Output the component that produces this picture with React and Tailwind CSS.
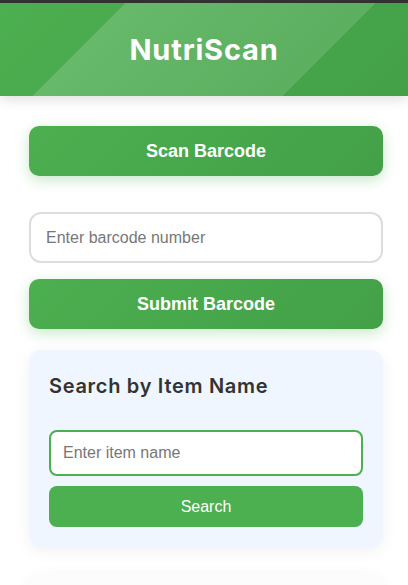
import React, { useState } from 'react';

const App = () => {
  const [barcode, setBarcode] = useState('');
  const [itemName, setItemName] = useState('');

  return (
    <div className="min-h-screen bg-white border-t-[3px] border-[#333333]" style={{ fontFamily: '"Liberation Sans", Arial, sans-serif' }}>
      {/* Header */}
      <header className="relative h-[93px] flex items-center justify-center bg-[linear-gradient(135deg,#4caf50,#43a047)] shadow-[0_4px_12px_rgba(0,0,0,0.12)]">
        <div className="absolute inset-0 bg-[linear-gradient(135deg,transparent_25%,rgba(255,255,255,0.16)_25%,rgba(255,255,255,0.12)_75%,transparent_75%)]" />
        <h1 className="relative text-white text-[29px] font-bold tracking-[0.8px] font-['Inter',sans-serif] pt-[1px]">
          NutriScan
        </h1>
      </header>

      <main className="pl-[29px] pr-[25px] pt-[30px]">
        <button className="w-full h-[50px] rounded-[10px] bg-[linear-gradient(135deg,#4caf50,#43a047)] text-white text-[18px] font-bold shadow-[0_4px_14px_rgba(76,175,80,0.3)]">
          Scan Barcode
        </button>

        <input
          value={barcode}
          onChange={(e) => setBarcode(e.target.value)}
          placeholder="Enter barcode number"
          className="mt-[36px] w-full h-[51px] rounded-[12px] border-2 border-[#dddddd] bg-white px-[15px] text-[16px] text-[#333] placeholder:text-[#777777] outline-none"
        />

        <button className="mt-[16px] w-full h-[50px] rounded-[10px] bg-[linear-gradient(135deg,#4caf50,#43a047)] text-white text-[18px] font-bold shadow-[0_4px_14px_rgba(76,175,80,0.3)]">
          Submit Barcode
        </button>

        {/* Search card */}
        <section className="mt-[21px] rounded-[12px] bg-[#eff6ff] px-[20px] pt-[21px] pb-[20px] shadow-[0_4px_16px_rgba(0,0,0,0.06)]">
          <h2 className="text-[20px] font-semibold tracking-[0.7px] text-[#333333] font-['Inter',sans-serif]">
            Search by Item Name
          </h2>
          <input
            value={itemName}
            onChange={(e) => setItemName(e.target.value)}
            placeholder="Enter item name"
            className="mt-[29px] w-full h-[46px] rounded-[8px] border-2 border-[#4caf50] bg-white px-[12px] text-[16px] text-[#333] placeholder:text-[#777777] outline-none"
          />
          <button className="mt-[10px] w-full h-[41px] rounded-[8px] bg-[#4caf50] text-white text-[16px]">
            Search
          </button>
        </section>

        <section className="mt-[27px] h-[120px] rounded-[12px] bg-[#fcfcfc] shadow-[0_4px_16px_rgba(0,0,0,0.06)]" />
      </main>
    </div>
  );
};

export default App;
